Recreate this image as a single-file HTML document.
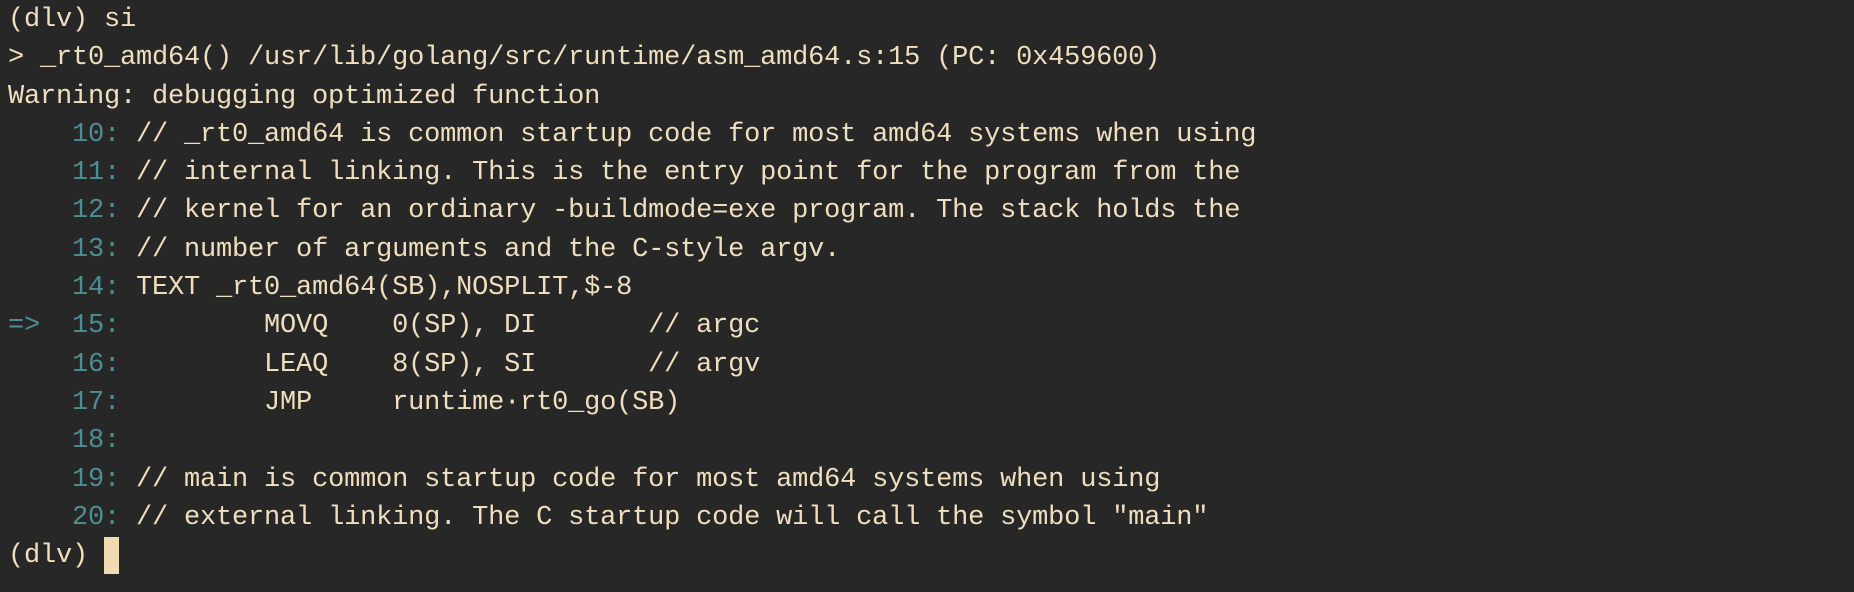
<!DOCTYPE html>
<html><head><meta charset="utf-8"><style>
html,body{margin:0;padding:0;background:#272727;width:1854px;height:592px;overflow:hidden}
pre{margin:0;position:absolute;left:8px;top:1px;font-family:"Liberation Mono",monospace;font-size:27px;letter-spacing:-0.2px;line-height:38.3px;color:#f0dfbf}
.n{color:#4e8e92}
.c{display:inline-block;width:15px;height:37px;background:#efdcb3;vertical-align:top}
</style></head><body><pre>(dlv) si
&gt; _rt0_amd64() /usr/lib/golang/src/runtime/asm_amd64.s:15 (PC: 0x459600)
Warning: debugging optimized function
<span class="n">    10:</span> // _rt0_amd64 is common startup code for most amd64 systems when using
<span class="n">    11:</span> // internal linking. This is the entry point for the program from the
<span class="n">    12:</span> // kernel for an ordinary -buildmode=exe program. The stack holds the
<span class="n">    13:</span> // number of arguments and the C-style argv.
<span class="n">    14:</span> TEXT _rt0_amd64(SB),NOSPLIT,$-8
<span class="n">=&gt;  15:</span>         MOVQ    0(SP), DI       // argc
<span class="n">    16:</span>         LEAQ    8(SP), SI       // argv
<span class="n">    17:</span>         JMP     runtime·rt0_go(SB)
<span class="n">    18:</span>
<span class="n">    19:</span> // main is common startup code for most amd64 systems when using
<span class="n">    20:</span> // external linking. The C startup code will call the symbol "main"
(dlv) <span class="c"></span></pre></body></html>
